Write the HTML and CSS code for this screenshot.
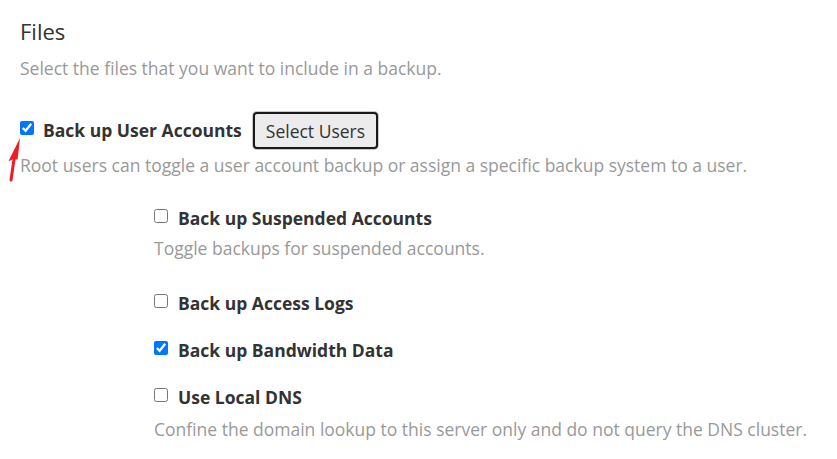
FILE: index.html
```html
<!DOCTYPE html>
<html>
<head>
<meta charset="utf-8">
<link rel="stylesheet" href="styles.css">
</head>
<body>
<div class="page">
  <h2 class="title">Files</h2>
  <p class="desc intro">Select the files that you want to include in a backup.</p>

  <div class="opt main-opt">
    <label class="row">
      <input type="checkbox" class="cb" checked>
      <span class="lbl">Back up User Accounts</span>
    </label>
    <button class="btn" type="button">Select Users</button>
  </div>
  <p class="desc help">Root users can toggle a user account backup or assign a specific backup system to a user.</p>

  <div class="sub">
    <div class="item">
      <label class="row"><input type="checkbox" class="cb"><span class="lbl">Back up Suspended Accounts</span></label>
      <p class="desc">Toggle backups for suspended accounts.</p>
    </div>
    <div class="item">
      <label class="row"><input type="checkbox" class="cb"><span class="lbl">Back up Access Logs</span></label>
    </div>
    <div class="item">
      <label class="row"><input type="checkbox" class="cb" checked><span class="lbl">Back up Bandwidth Data</span></label>
    </div>
    <div class="item">
      <label class="row"><input type="checkbox" class="cb"><span class="lbl">Use Local DNS</span></label>
      <p class="desc dns-desc">Confine the domain lookup to this server only and do not query the DNS cluster.</p>
    </div>
  </div>

  <svg class="arrow" width="30" height="52" viewBox="0 0 30 52">
    <path d="M11 48 L14.2 26" stroke="#ee1c24" stroke-width="3" stroke-linecap="round" fill="none"/>
    <path d="M20 6 L17.6 27.6 L13 27.2 L8.4 29.2 Z" fill="#ee1c24"/>
  </svg>
</div>
</body>
</html>
```

FILE: styles.css
```css
html, body {
  margin: 0;
  padding: 0;
  background: #fff;
}
.page {
  position: relative;
  padding: 16px 20px 0 20px;
  font-family: "Open Sans", "Liberation Sans", sans-serif;
  color: #333;
}
.title {
  margin: 0;
  font-size: 22px;
  font-weight: 400;
  line-height: 30px;
}
.desc {
  margin: 0;
  font-size: 17.5px;
  line-height: 26px;
  color: #999;
}
.intro {
  margin-top: 9px;
}
.main-opt {
  display: flex;
  align-items: center;
  margin-top: 31px;
}
.main-opt .row {
  margin-bottom: 2px;
  gap: 9px;
}
.row {
  display: flex;
  align-items: center;
  gap: 10px;
}
.cb {
  margin: 0 0 4px 0;
  width: 14px;
  height: 14px;
}
.lbl {
  font-size: 17.5px;
  font-weight: 700;
  line-height: 26px;
}
.btn {
  margin-left: 11px;
  height: 37px;
  padding: 0 11px;
  font-family: inherit;
  font-size: 17.5px;
  color: #333;
  background: #ececec;
  border: 2px solid #1a1a1a;
  border-radius: 4px;
  box-shadow: 0 0 0 1px #c8c8c8;
}
.help {
  margin-top: 3px;
}
.sub {
  margin-left: 134px;
  margin-top: 27px;
}
.item {
  display: flow-root;
  margin-bottom: 21px;
}
.item .desc {
  margin-top: 4px;
  margin-bottom: 8px;
}
.item .dns-desc {
  margin-top: 6px;
}
.arrow {
  position: absolute;
  left: 0;
  top: 132px;
}
```
